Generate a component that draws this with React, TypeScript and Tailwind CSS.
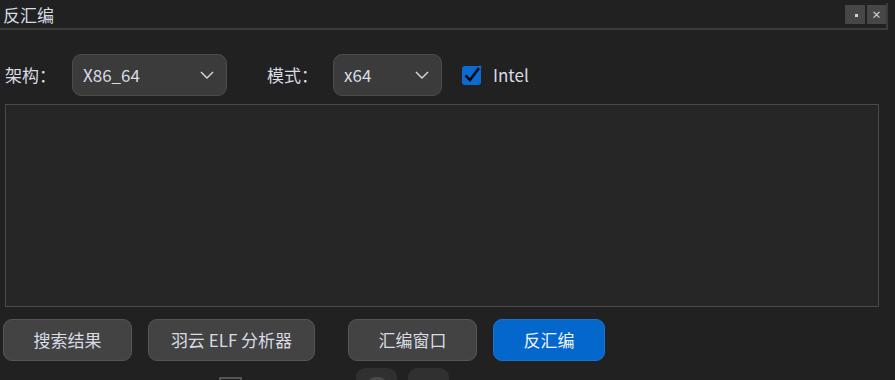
import React from "react";

const font = { fontFamily: '"Noto Sans CJK SC", "Noto Sans", sans-serif' };

function Chevron() {
	return (
		<svg width="14" height="8" viewBox="0 0 14 8" className="shrink-0">
			<polyline
				points="1,1 7,7 13,1"
				fill="none"
				stroke="#d8dce4"
				strokeWidth="1.4"
			/>
		</svg>
	);
}

function Select({ value, width }: { value: string; width: string }) {
	return (
		<div
			className={`flex h-[42px] items-center justify-between rounded-[9px] border border-[#4c4c4c] bg-[#3b3b3b] pl-[10px] pr-[12px] text-[17px] text-[#d8dce4] ${width}`}
		>
			<span>{value}</span>
			<Chevron />
		</div>
	);
}

function Btn({ label, width, primary }: { label: string; width: string; primary?: boolean }) {
	return (
		<div
			className={
				"flex h-[42px] items-center justify-center rounded-[9px] border text-[17px] " +
				width +
				(primary
					? " border-[#1a74d6] bg-[#0367cc] text-[#f0f4fa]"
					: " border-[#555555] bg-[#434343] text-[#d8dce4]")
			}
		>
			{label}
		</div>
	);
}

export default function App() {
	return (
		<div className="h-[380px] w-[895px] overflow-hidden bg-[#212121]" style={font}>
			{/* title bar */}
			<div className="mr-[7px] pt-[3px]">
				<div className="flex h-[27px] items-start justify-between border-b-2 border-r-2 border-[#3c3c3c]">
					<span className="mt-[1px] pl-[3px] text-[17px] leading-[22px] text-[#d8dce4]">反汇编</span>
					<div className="mt-[2px] flex gap-[2px]">
						<div className="flex h-[19px] w-[20px] items-center justify-center bg-[#474747]">
							<div className="ml-[3px] mt-[1px] h-[3px] w-[3px] bg-[#cfd4dc]" />
						</div>
						<div className="flex h-[19px] w-[19px] items-center justify-center bg-[#474747] text-[10px] font-bold leading-none text-[#cfd4dc]">
							×
						</div>
					</div>
				</div>
			</div>

			{/* options row */}
			<div className="mt-[24px] flex items-center text-[17px] text-[#d8dce4]">
				<span className="ml-[5px] w-[67px]">架构：</span>
				<Select value="X86_64" width="w-[155px]" />
				<span className="ml-[40px] w-[66px]">模式：</span>
				<Select value="x64" width="w-[109px]" />
				<svg width="22" height="22" viewBox="0 0 22 22" className="ml-[19px]">
					<rect x="1" y="2" width="19" height="19" rx="3" fill="#0a6bd4" />
					<path d="M4.5 11.5 L9 16 L18 4" fill="none" stroke="#0b0b0b" strokeWidth="2.6" />
					<circle cx="19" cy="3" r="1.6" fill="#0a6bd4" />
				</svg>
				<span className="ml-[10px]">Intel</span>
			</div>

			{/* output area */}
			<div className="ml-[5px] mt-[8px] h-[203px] w-[874px] border border-[#4a4a4a] bg-[#262626]" />

			{/* action buttons */}
			<div className="ml-[3px] mt-[12px] flex gap-[16px]">
				<Btn label="搜索结果" width="w-[129px]" />
				<Btn label="羽云 ELF 分析器" width="w-[167px]" />
				<div className="ml-[17px]">
					<Btn label="汇编窗口" width="w-[129px]" />
				</div>
				<Btn label="反汇编" width="w-[112px]" primary />
			</div>

			{/* partially visible row */}
			<div className="mt-[7px] flex items-start">
				<div className="ml-[219px] mt-[9px] h-[14px] w-[23px] border-2 border-[#555555]" />
				<div className="ml-[114px] flex h-[30px] w-[41px] justify-center rounded-[9px] bg-[#303030] pt-[9px]">
					<div className="h-[14px] w-[18px] rounded-full bg-[#4a4a4a]" />
				</div>
				<div className="ml-[11px] h-[30px] w-[41px] rounded-[9px] bg-[#303030]" />
			</div>
		</div>
	);
}
